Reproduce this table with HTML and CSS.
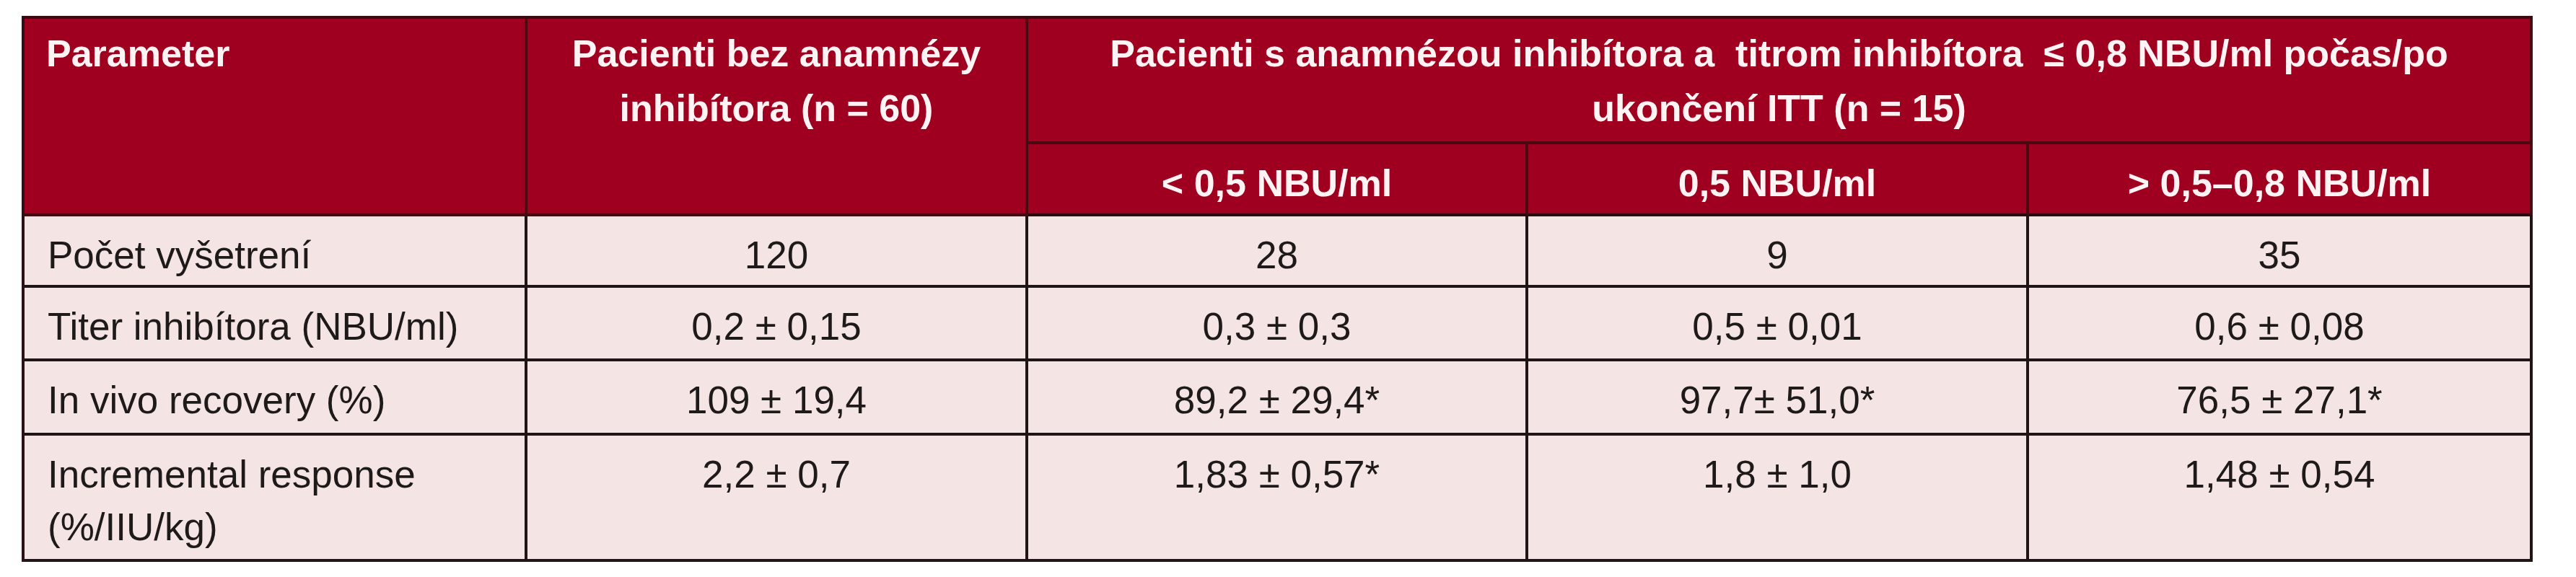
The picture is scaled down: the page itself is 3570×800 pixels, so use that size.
FILE: index.html
```html
<!DOCTYPE html>
<html lang="sk">
<head>
<meta charset="utf-8">
<title>Tabuľka</title>
<link rel="stylesheet" href="styles.css">
</head>
<body>
<div class="page">
<table class="data">
<colgroup>
<col class="c1"><col class="c2"><col class="c3"><col class="c4"><col class="c5">
</colgroup>
<thead>
<tr class="hr1">
<th rowspan="2" class="left">Parameter</th>
<th rowspan="2">Pacienti bez anamnézy<br>inhibítora (n = 60)</th>
<th colspan="3">Pacienti s anamnézou inhibítora a&nbsp; titrom inhibítora&nbsp; ≤ 0,8 NBU/ml počas/po<br>ukončení ITT (n = 15)</th>
</tr>
<tr class="hr2">
<th class="sub">&lt; 0,5 NBU/ml</th>
<th class="sub">0,5 NBU/ml</th>
<th class="sub">&gt; 0,5–0,8 NBU/ml</th>
</tr>
</thead>
<tbody>
<tr class="r1">
<td class="left">Počet vyšetrení</td><td>120</td><td>28</td><td>9</td><td>35</td>
</tr>
<tr class="r2">
<td class="left">Titer inhibítora (NBU/ml)</td><td>0,2 ± 0,15</td><td>0,3 ± 0,3</td><td>0,5 ± 0,01</td><td>0,6 ± 0,08</td>
</tr>
<tr class="r3">
<td class="left">In vivo recovery (%)</td><td>109 ± 19,4</td><td>89,2 ± 29,4*</td><td>97,7± 51,0*</td><td>76,5 ± 27,1*</td>
</tr>
<tr class="r4">
<td class="left">Incremental response<br>(%/IIU/kg)</td><td>2,2 ± 0,7</td><td>1,83 ± 0,57*</td><td>1,8 ± 1,0</td><td>1,48 ± 0,54</td>
</tr>
</tbody>
</table>
</div>
</body>
</html>
```

FILE: styles.css
```css
html, body {
  margin: 0;
  padding: 0;
  background: #ffffff;
}

.page {
  padding: 22px 0 0 30px;
}

.data {
  border-collapse: separate;
  border-spacing: 0;
  table-layout: fixed;
  width: 3480px;
  border-left: 4px solid #2a1216;
  border-top: 4px solid #3a0a12;
  font-family: "Liberation Sans", Arial, sans-serif;
}

.c1 { width: 697px; }
.c2 { width: 694px; }
.c3 { width: 693px; }
.c4 { width: 694px; }
.c5 { width: 698px; }

th, td {
  border-right: 4px solid #1f1416;
  border-bottom: 4px solid #1f1416;
  padding: 0 30px;
  vertical-align: top;
  text-align: center;
}

th {
  background: #a0001f;
  color: #fff3f4;
  font-weight: 700;
  font-size: 52px;
  line-height: 76px;
  padding-top: 10px;
  border-color: #4a0810;
}

th.sub {
  padding-top: 16px;
  border-bottom-color: #2a0a0e;
}

th.left {
  text-align: left;
}

td {
  background: #f4e4e4;
  color: #1e1a1a;
  font-size: 53px;
  line-height: 73px;
  padding-top: 17px;
}

td.left {
  text-align: left;
  padding-left: 32px;
}

.hr1 { height: 174px; }
.hr2 { height: 100px; }
.r1 { height: 99px; }
.r2 { height: 102px; }
.r3 { height: 103px; }
.r4 { height: 175px; }
```
